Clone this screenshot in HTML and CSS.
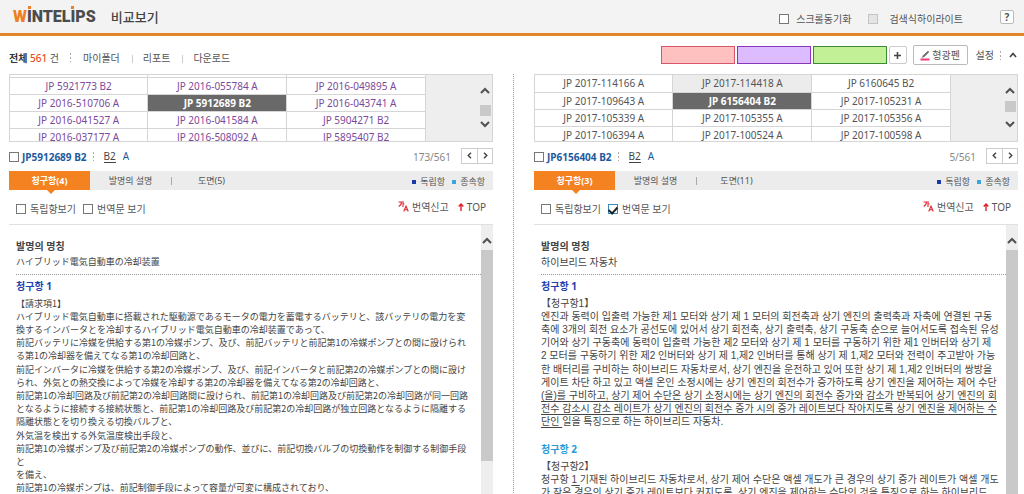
FILE: index.html
```html
<!DOCTYPE html>
<html lang="ko">
<head>
<meta charset="utf-8">
<title>WINTELIPS 비교보기</title>
<link rel="stylesheet" href="styles.css">
</head>
<body>
<header class="header">
  <div class="logo"><span class="logo-w">W</span><span class="logo-i">I</span>NTEL<span class="logo-i">I</span>PS</div>
  <h1 class="page-title">비교보기</h1>
  <div class="header-options">
    <label class="check"><input type="checkbox"><span>스크롤동기화</span></label>
    <label class="check check-wide"><input type="checkbox" disabled><span>검색식하이라이트</span></label>
    <button class="help" type="button">?</button>
  </div>
</header>

<div class="toolbar">
  <div class="total"><b>전체</b> <span class="total-count">561</span> 건</div>
  <span class="dots"></span>
  <nav class="menu">
    <a href="#">마이폴더</a><a href="#">리포트</a><a href="#">다운로드</a>
  </nav>
  <div class="tools">
    <button class="swatch swatch-pink" type="button" aria-label="분홍"></button>
    <button class="swatch swatch-purple" type="button" aria-label="보라"></button>
    <button class="swatch swatch-green" type="button" aria-label="초록"></button>
    <button class="add" type="button" aria-label="추가"><svg width="9" height="9" viewBox="0 0 9 9"><path d="M4.5 1v7M1 4.5h7" stroke="#444" stroke-width="1.6"/></svg></button>
    <button class="pen" type="button"><svg width="10" height="11" viewBox="0 0 10 11"><path d="M1.500 8L3 5.500 8 .8 9.200 2 4.500 6.800z" fill="#666"/><path d="M.5 9.500h9" stroke="#ee3b78" stroke-width="2"/></svg>형광펜</button>
    <a class="settings" href="#">설정</a>
    <span class="dots"></span>
    <button class="plain" type="button" aria-label="접기"><svg width="8" height="6" viewBox="0 0 8 6"><path d="M1 5l3-3.500L7 5" fill="none" stroke="#444" stroke-width="1.700"/></svg></button>
  </div>
</div>

<main class="compare">
  <section class="panel">
    <div class="list">
      <table class="docs visited">
        <tr class="peek"><td></td><td></td><td></td></tr>
        <tr><td>JP 5921773 B2</td><td>JP 2016-055784 A</td><td>JP 2016-049895 A</td></tr>
        <tr><td>JP 2016-510706 A</td><td class="selected">JP 5912689 B2</td><td>JP 2016-043741 A</td></tr>
        <tr><td>JP 2016-041527 A</td><td>JP 2016-041584 A</td><td>JP 5904271 B2</td></tr>
        <tr><td>JP 2016-037177 A</td><td>JP 2016-508092 A</td><td>JP 5895407 B2</td></tr>
      </table>
      <div class="list-scroll">
        <svg width="10" height="7" viewBox="0 0 10 7"><path d="M1 6l4-4 4 4" fill="none" stroke="#505050" stroke-width="2"/></svg>
        <span class="list-thumb"></span>
        <svg width="10" height="7" viewBox="0 0 10 7"><path d="M1 1l4 4 4-4" fill="none" stroke="#505050" stroke-width="2"/></svg>
      </div>
    </div>
    <div class="doc-bar">
      <label class="check doc-check"><input type="checkbox"><b>JP5912689 B2</b></label>
      <span class="dots"></span>
      <a class="kind kind-on" href="#">B2</a><a class="kind" href="#">A</a>
      <span class="position">173/561</span>
      <div class="pager">
        <button type="button" aria-label="이전"><svg width="5" height="7" viewBox="0 0 5 7"><path d="M4 .7L1.200 3.500 4 6.300" fill="none" stroke="#444" stroke-width="1.400"/></svg></button>
        <button type="button" aria-label="다음"><svg width="5" height="7" viewBox="0 0 5 7"><path d="M1 .7l2.800 2.800L1 6.300" fill="none" stroke="#444" stroke-width="1.400"/></svg></button>
      </div>
    </div>
    <div class="tabs">
      <button class="tab tab-on" type="button">청구항(4)</button>
      <button class="tab" type="button">발명의 설명</button>
      <button class="tab tab-last" type="button">도면(5)</button>
      <div class="legend"><span class="key">독립항</span><span class="key key-sub">종속항</span></div>
    </div>
    <div class="view-bar">
      <label class="check"><input type="checkbox"><span>독립항보기</span></label>
      <label class="check"><input type="checkbox"><span>번역문 보기</span></label>
      <div class="actions">
        <a href="#"><svg width="11" height="11" viewBox="0 0 11 11"><path d="M.5 1h3Q3.500 4 .7 5.500M5 0v6M5 2.800h1.400M5.700 10.500L8 5.200l2.300 5.300M6.500 8.800h3" fill="none" stroke="#e02b35" stroke-width="1.100"/></svg>번역신고</a>
        <a href="#"><svg width="6" height="8" viewBox="0 0 6 8"><path d="M3 8V1.500M.7 3.500L3 1l2.300 2.500" fill="none" stroke="#e0202b" stroke-width="1.400"/></svg>TOP</a>
      </div>
    </div>
    <div class="viewer">
      <article class="text">
        <h2>발명의 명칭</h2>
        <p class="name ja" lang="ja">ハイブリッド電気自動車の冷却装置</p>
        <h3>청구항 1</h3>
        <div class="claim ja" lang="ja">
          <p class="claim-tag">【請求項1】</p>
          <p>ハイブリッド電気自動車に搭載された駆動源であるモータの電力を蓄電するバッテリと、該バッテリの電力を変<br>換するインバータとを冷却するハイブリッド電気自動車の冷却装置であって、<br>前記バッテリに冷媒を供給する第1の冷媒ポンプ、及び、前記バッテリと前記第1の冷媒ポンプとの間に設けられ<br>る第1の冷却器を備えてなる第1の冷却回路と、</p>
          <p>前記インバータに冷媒を供給する第2の冷媒ポンプ、及び、前記インバータと前記第2の冷媒ポンプとの間に設け<br>られ、外気との熱交換によって冷媒を冷却する第2の冷却器を備えてなる第2の冷却回路と、<br>前記第1の冷却回路及び前記第2の冷却回路間に設けられ、前記第1の冷却回路及び前記第2の冷却回路が同一回路<br>となるように接続する接続状態と、前記第1の冷却回路及び前記第2の冷却回路が独立回路となるように隔離する<br>隔離状態とを切り換える切換バルブと、</p>
          <p>外気温を検出する外気温度検出手段と、<br>前記第1の冷媒ポンプ及び前記第2の冷媒ポンプの動作、並びに、前記切換バルブの切換動作を制御する制御手段<br>と<br>を備え、<br>前記第1の冷媒ポンプは、前記制御手段によって容量が可変に構成されており、</p>
        </div>
      </article>
      <div class="scrollbar">
        <svg width="10" height="7" viewBox="0 0 10 7"><path d="M1 6l4-4 4 4" fill="none" stroke="#505050" stroke-width="2"/></svg>
        <span class="thumb"></span>
      </div>
    </div>
  </section>

  <div class="divider"></div>

  <section class="panel">
    <div class="list">
      <table class="docs">
        <tr><td>JP 2017-114166 A</td><td class="hover">JP 2017-114418 A</td><td>JP 6160645 B2</td></tr>
        <tr><td>JP 2017-109643 A</td><td class="selected">JP 6156404 B2</td><td>JP 2017-105231 A</td></tr>
        <tr><td>JP 2017-105339 A</td><td>JP 2017-105355 A</td><td>JP 2017-105356 A</td></tr>
        <tr><td>JP 2017-106394 A</td><td>JP 2017-100524 A</td><td>JP 2017-100598 A</td></tr>
      </table>
      <div class="list-scroll">
        <svg width="10" height="7" viewBox="0 0 10 7"><path d="M1 6l4-4 4 4" fill="none" stroke="#505050" stroke-width="2"/></svg>
        <span class="list-thumb list-thumb-high"></span>
        <svg width="10" height="7" viewBox="0 0 10 7"><path d="M1 1l4 4 4-4" fill="none" stroke="#505050" stroke-width="2"/></svg>
      </div>
    </div>
    <div class="doc-bar">
      <label class="check doc-check"><input type="checkbox"><b>JP6156404 B2</b></label>
      <span class="dots"></span>
      <a class="kind kind-on" href="#">B2</a><a class="kind" href="#">A</a>
      <span class="position">5/561</span>
      <div class="pager">
        <button type="button" aria-label="이전"><svg width="5" height="7" viewBox="0 0 5 7"><path d="M4 .7L1.200 3.500 4 6.300" fill="none" stroke="#444" stroke-width="1.400"/></svg></button>
        <button type="button" aria-label="다음"><svg width="5" height="7" viewBox="0 0 5 7"><path d="M1 .7l2.800 2.800L1 6.300" fill="none" stroke="#444" stroke-width="1.400"/></svg></button>
      </div>
    </div>
    <div class="tabs">
      <button class="tab tab-on" type="button">청구항(3)</button>
      <button class="tab" type="button">발명의 설명</button>
      <button class="tab tab-last" type="button">도면(11)</button>
      <div class="legend"><span class="key">독립항</span><span class="key key-sub">종속항</span></div>
    </div>
    <div class="view-bar">
      <label class="check"><input type="checkbox"><span>독립항보기</span></label>
      <label class="check"><input type="checkbox" checked><span>번역문 보기</span></label>
      <div class="actions">
        <a href="#"><svg width="11" height="11" viewBox="0 0 11 11"><path d="M.5 1h3Q3.500 4 .7 5.500M5 0v6M5 2.800h1.400M5.700 10.500L8 5.200l2.300 5.300M6.500 8.800h3" fill="none" stroke="#e02b35" stroke-width="1.100"/></svg>번역신고</a>
        <a href="#"><svg width="6" height="8" viewBox="0 0 6 8"><path d="M3 8V1.500M.7 3.500L3 1l2.300 2.500" fill="none" stroke="#e0202b" stroke-width="1.400"/></svg>TOP</a>
      </div>
    </div>
    <div class="viewer">
      <article class="text">
        <h2>발명의 명칭</h2>
        <p class="name">하이브리드 자동차</p>
        <h3>청구항 1</h3>
        <div class="claim">
          <p class="claim-tag">【청구항1】</p>
          <p>엔진과 동력이 입출력 가능한 제1 모터와 상기 제 1 모터의 회전축과 상기 엔진의 출력축과 자축에 연결된 구동<br>축에 3개의 회전 요소가 공선도에 있어서 상기 회전축, 상기 출력축, 상기 구동축 순으로 늘어서도록 접속된 유성<br>기어와 상기 구동축에 동력이 입출력 가능한 제2 모터와 상기 제 1 모터를 구동하기 위한 제1 인버터와 상기 제<br>2 모터를 구동하기 위한 제2 인버터와 상기 제 1,제2 인버터를 통해 상기 제 1,제2 모터와 전력이 주고받아 가능</p>
          <p>한 배터리를 구비하는 하이브리드 자동차로서, 상기 엔진을 운전하고 있어 또한 상기 제 1,제2 인버터의 쌍방을<br>게이트 차단 하고 있고 액셀 온인 소정시에는 상기 엔진의 회전수가 증가하도록 상기 엔진을 제어하는 제어 수단<br><u>(을)를 구비하고, 상기 제어 수단은 상기 소정시에는 상기 엔진의 회전수 증가와 감소가 반복되어 상기 엔진의 회<br>전수 감소시 감소 레이트가 상기 엔진의 회전수 증가 시의 증가 레이트보다 작아지도록 상기 엔진을 제어하는 수<br>단인 </u>일을 특징으로 하는 하이브리드 자동차.</p>
        </div>
        <h3 class="sub">청구항 2</h3>
        <div class="claim">
          <p class="claim-tag">【청구항2】</p>
          <p>청구항 <u>1 </u>기재된 하이브리드 자동차로서, 상기 제어 수단은 액셀 개도가 큰 경우의 상기 증가 레이트가 액셀 개도<br>가 작은 경우의 상기 증가 레이트보다 커지도록, 상기 엔진을 제어하는 수단인 것을 특징으로 하는 하이브리드</p>
        </div>
      </article>
      <div class="scrollbar">
        <svg width="10" height="7" viewBox="0 0 10 7"><path d="M1 6l4-4 4 4" fill="none" stroke="#505050" stroke-width="2"/></svg>
        <span class="thumb thumb-long"></span>
      </div>
    </div>
  </section>
</main>
</body>
</html>
```
FILE: styles.css
```css
* { box-sizing: border-box; }
body {
  margin: 0;
  height: 100vh;
  display: flex;
  flex-direction: column;
  overflow: hidden;
  background: #fff;
  color: #555;
  font: 10px/14px "Noto Sans", "Noto Sans CJK KR", sans-serif;
}
h1, h2, h3, p { margin: 0; }
a { color: inherit; text-decoration: none; }
button { margin: 0; padding: 0; font: inherit; color: inherit; background: none; border: 0; }
svg { display: block; flex: none; }

/* Header */
.header {
  display: flex;
  align-items: center;
  height: 36px;
  padding: 0 10px 0 13px;
  background: #f3f3f3;
  border-bottom: 3px solid #e0862c;
}
.logo { color: #4c4c4c; font: 900 16px/16px Roboto, sans-serif; }
.logo-w { color: #ee8022; }
.logo-i { position: relative; }
.logo-i::before { content: ""; position: absolute; left: 1px; top: -1px; width: 3px; height: 3px; background: #ee8022; }
.page-title { margin-left: 15px; padding-top: 1px; font-size: 13px; line-height: 18px; font-weight: 500; color: #444; }
.header-options { margin-left: auto; display: flex; align-items: center; gap: 17px; }
.help { width: 14px; height: 14px; margin-left: 20px; border: 1px solid #bbb; border-radius: 2px; background: #fff; font-weight: bold; line-height: 12px; }

.check { display: flex; align-items: center; gap: 4px; white-space: nowrap; }
.check input { appearance: none; flex: none; display: grid; place-content: start center; width: 10px; height: 10px; margin: 0; border: 1px solid #777; background: #fff; }
.check input:disabled { border-color: #c4c4c4; background: #e4e4e4; }
.check input:checked { border-color: #3a8ac0; }
.check input:checked::before { content: ""; width: 4px; height: 7px; border: solid #222; border-width: 0 2px 2px 0; transform: rotate(42deg); }
.header-options .check { gap: 7px; padding-top: 4px; }
.header-options .check-wide { gap: 11px; }

.dots { flex: none; width: 1px; height: 9px; background: repeating-linear-gradient(#aaa 0 2px, transparent 2px 4px); }

/* Toolbar */
.toolbar { display: flex; align-items: center; height: 38px; padding: 5px 7px 0 9px; }
.total b { color: #333; }
.total-count { color: #e8501e; font-weight: 500; }
.toolbar > .dots { margin: 0 12px 0 11px; }
.menu { display: flex; }
.menu a + a { margin-left: 12px; padding-left: 11px; background: linear-gradient(#ccc, #ccc) 0 4px / 1px 8px no-repeat; }
.tools { margin-left: auto; display: flex; align-items: center; gap: 2px; padding-bottom: 5px; }
.swatch { width: 74px; height: 18px; border: 1px solid; }
.swatch-pink { background: #ffc0c0; border-color: #d8566a; }
.swatch-purple { background: #dcbcff; border-color: #8a35c0; }
.swatch-green { background: #c2f096; border-color: #3d8a35; }
.add { width: 18px; height: 18px; display: flex; align-items: center; justify-content: center; border: 1px solid #ccc; border-radius: 2px; }
.pen { display: flex; align-items: center; justify-content: center; gap: 2px; width: 55px; height: 20px; margin: 0 6px 0 4px; border: 1px solid #bbb; border-radius: 2px; }
.tools .dots { margin: 0 6px 0 4px; }

/* Panels */
.compare { flex: 1; min-height: 0; display: grid; grid-template-columns: 1fr 1px 1fr; column-gap: 20px; padding: 0 6px 0 9px; }
.divider { background: repeating-linear-gradient(#999 0 1px, transparent 1px 2px); }
.panel { display: flex; flex-direction: column; min-width: 0; min-height: 0; }

.list { display: flex; flex: none; height: 68px; overflow: hidden; border: 1px solid #d5d5d5; background: #eee; }
.docs { flex: 1; height: 68px; border-collapse: collapse; table-layout: fixed; background: #fff; }
.docs td { height: 17px; padding: 0; border: solid #d5d5d5; border-width: 0 1px 1px 0; text-align: center; line-height: 16px; }
.docs .peek td { height: 2px; }
.visited { color: #7b4a9c; }
.docs .selected { background: #696969; color: #fff; font-weight: bold; }
.docs .hover { background: #ececec; }
.list-scroll { flex: none; width: 66px; display: flex; flex-direction: column; align-items: flex-end; justify-content: space-between; padding: 12px 1px 13px 0; }
.list-scroll svg { margin-right: 1px; }
.list-thumb { width: 11px; height: 11px; margin-top: 6px; background: #c9c9c9; }
.list-thumb-high { margin: 0 0 3px; }

.doc-bar { display: flex; flex: none; align-items: center; height: 29px; }
.doc-bar b { color: #1c5a9e; }
.doc-check { gap: 3px; }
.doc-bar .dots { margin: 0 10px 0 6px; }
.kind { margin-right: 7px; color: #1c5a9e; line-height: 12px; border-bottom: 1px solid transparent; }
.kind-on { color: #444; border-color: #444; }
.position { margin-left: auto; color: #888; }
.pager { display: flex; margin: 0 0 2px 10px; border: 1px solid #ccc; }
.pager button { width: 15px; height: 14px; display: flex; align-items: center; justify-content: center; }
.pager button + button { border-left: 1px solid #ccc; }

.tabs { display: flex; flex: none; height: 19px; background: #ececec; font-size: 9px; }
.tab { width: 81px; position: relative; }
.tab-on { background: #f58220; color: #fff; font-weight: bold; }
.tab-on::after { content: ""; position: absolute; left: 38px; top: 19px; border: solid transparent; border-top-color: #f58220; border-width: 4px 4px 0; }
.tab-last::before { content: ""; position: absolute; left: 0; top: 6px; width: 1px; height: 8px; background: #aaa; }
.legend { margin-left: auto; display: flex; align-items: center; gap: 7px; padding: 3px 8px 0 0; }
.key { display: flex; align-items: center; gap: 4px; }
.key::before { content: ""; width: 4px; height: 4px; background: #1a3aa8; }
.key-sub::before { background: #3aa5dd; }

.view-bar { display: flex; flex: none; align-items: center; gap: 7px; height: 35px; padding: 3px 7px 0; border-bottom: 1px solid #e0e0e0; }
.actions { margin-left: auto; display: flex; gap: 9px; padding-bottom: 4px; }
.actions a { display: flex; align-items: center; gap: 3px; }

/* Claim text */
.viewer { flex: 1; min-height: 0; display: flex; overflow: hidden; }
.text { flex: 1; min-width: 0; padding: 14px 0 0 7px; color: #444; white-space: nowrap; }
.text h2 { font-size: 10px; line-height: 14px; color: #444; }
.name { padding: 2px 0 5px; border-bottom: 1px dotted #999; }
.text h3 { margin-top: 3px; font-size: 10px; line-height: 16px; color: #2340b0; }
.text .sub { margin-top: 13px; color: #2a9bd8; }
.claim { font-family: "Liberation Sans", "Noto Sans CJK KR", sans-serif; line-height: 13px; }
.claim p + p + p { margin-top: 1px; }
.claim .claim-tag { margin-top: 3px; }
.claim u { text-underline-offset: 2px; }
.ja { font-family: "Noto Sans CJK JP", sans-serif; font-size: 9px; }
.scrollbar { flex: none; width: 12px; display: flex; flex-direction: column; align-items: center; padding-top: 12px; background: #eee; }
.thumb { width: 12px; height: 82%; margin-top: 6px; background: #c9c9c9; }
.thumb-long { height: 100%; }
```
